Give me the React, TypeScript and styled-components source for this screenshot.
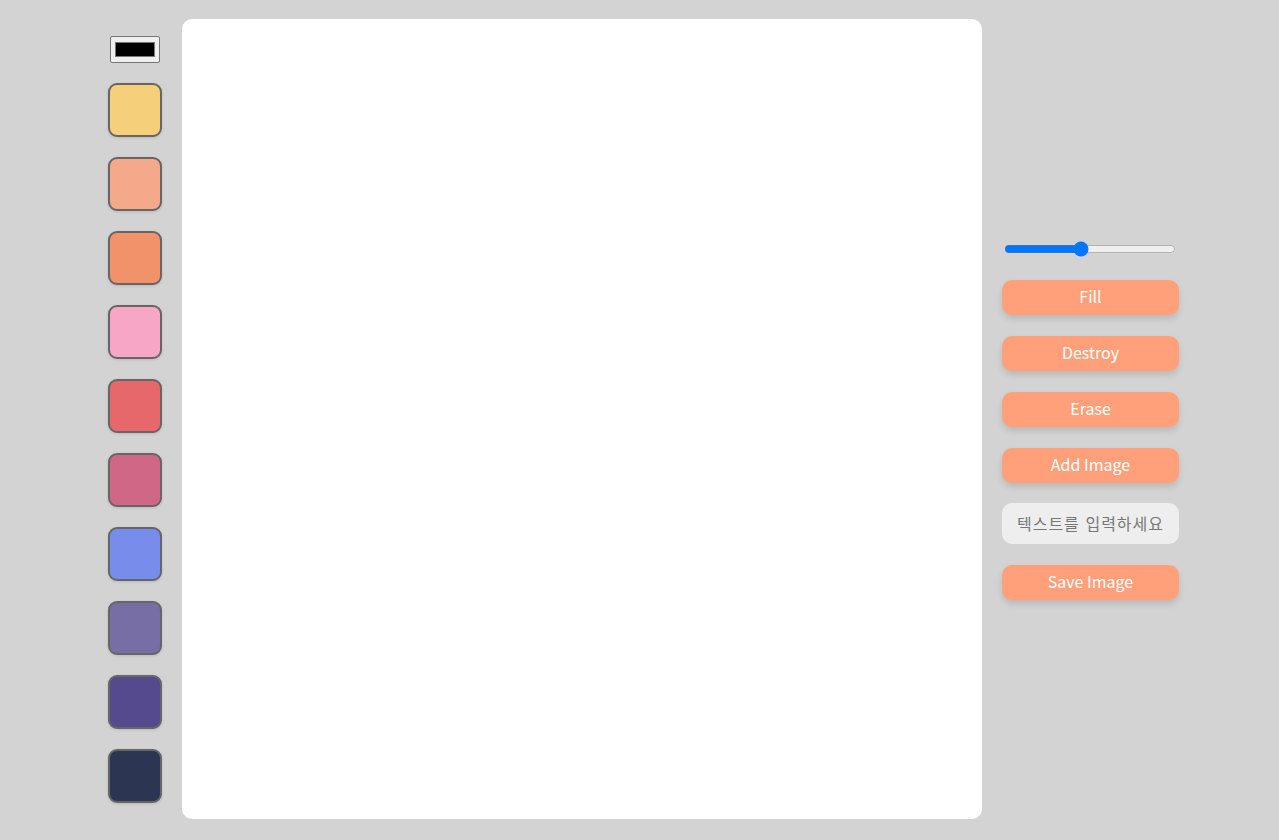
import React from "react";
import styled, { createGlobalStyle } from "styled-components";

const Global = createGlobalStyle`
  html, body { margin: 0; padding: 0; }
  body {
    background: #d3d3d3;
    font-family: "Noto Sans CJK KR", "Noto Sans", sans-serif;
  }
`;

const Page = styled.div`
  height: 838px;
  display: flex;
  align-items: center;
  justify-content: flex-start;
  padding-left: 108px;
  gap: 20px;
  box-sizing: border-box;
`;

const Palette = styled.div`
  display: flex;
  flex-direction: column;
  align-items: center;
  gap: 20px;
  width: 54px;
`;

const ColorInput = styled.input`
  width: 50px;
  height: 27px;
  margin: 0;
  padding: 1px 2px;
  border: 1px solid #767676;
  border-radius: 2px;
  background: #efefef;
  box-sizing: border-box;
`;

const Swatch = styled.div<{ $color: string }>`
  width: 54px;
  height: 54px;
  box-sizing: border-box;
  border: 2px solid #666;
  border-radius: 9px;
  background: ${(p) => p.$color};
  box-shadow: 0 1px 3px rgba(0, 0, 0, 0.12);
  cursor: pointer;
`;

const Canvas = styled.div`
  width: 800px;
  height: 800px;
  background: #fff;
  border-radius: 10px;
  flex-shrink: 0;
`;

const Controls = styled.div`
  display: flex;
  flex-direction: column;
  width: 177px;
  gap: 21px;
  margin-top: 2px;
`;

const Range = styled.input`
  width: 172px;
  margin: 1px 0 2px 2px;
  height: 16px;
`;

const Button = styled.button`
  height: 35px;
  border: none;
  border-radius: 10px;
  background: #ffa07a;
  color: #fff;
  font-family: "Noto Sans CJK KR", "Noto Sans", sans-serif;
  font-size: 16px;
  box-shadow: 0 4px 6px rgba(0, 0, 0, 0.12);
  cursor: pointer;
  padding: 0 0 3px;
`;

const TextInput = styled.input`
  height: 41px;
  border: none;
  border-radius: 10px;
  background: #eeeeee;
  padding: 0 8px 2px;
  box-sizing: border-box;
  font-family: "Noto Sans CJK KR", "Noto Sans", sans-serif;
  font-size: 16px;
  letter-spacing: 1px;
  word-spacing: 1px;
  text-align: center;
  margin: -1px 0 0;
  outline: none;
  &::placeholder {
    color: #777;
  }
`;

const colors = [
  "#f6cf7a",
  "#f3a98a",
  "#f2926a",
  "#f7a6c6",
  "#e7686b",
  "#ce6886",
  "#788ceb",
  "#776ea5",
  "#564a8f",
  "#2c3551",
];

export default function App() {
  return (
    <>
      <Global />
      <Page>
        <Palette>
          <ColorInput type="color" defaultValue="#000000" />
          {colors.map((c) => (
            <Swatch key={c} $color={c} />
          ))}
        </Palette>
        <Canvas />
        <Controls>
          <Range type="range" min={1} max={10} step={0.5} defaultValue={5} />
          <Button>Fill</Button>
          <Button>Destroy</Button>
          <Button>Erase</Button>
          <Button>Add Image</Button>
          <TextInput placeholder="텍스트를 입력하세요" />
          <Button>Save Image</Button>
        </Controls>
      </Page>
    </>
  );
}
